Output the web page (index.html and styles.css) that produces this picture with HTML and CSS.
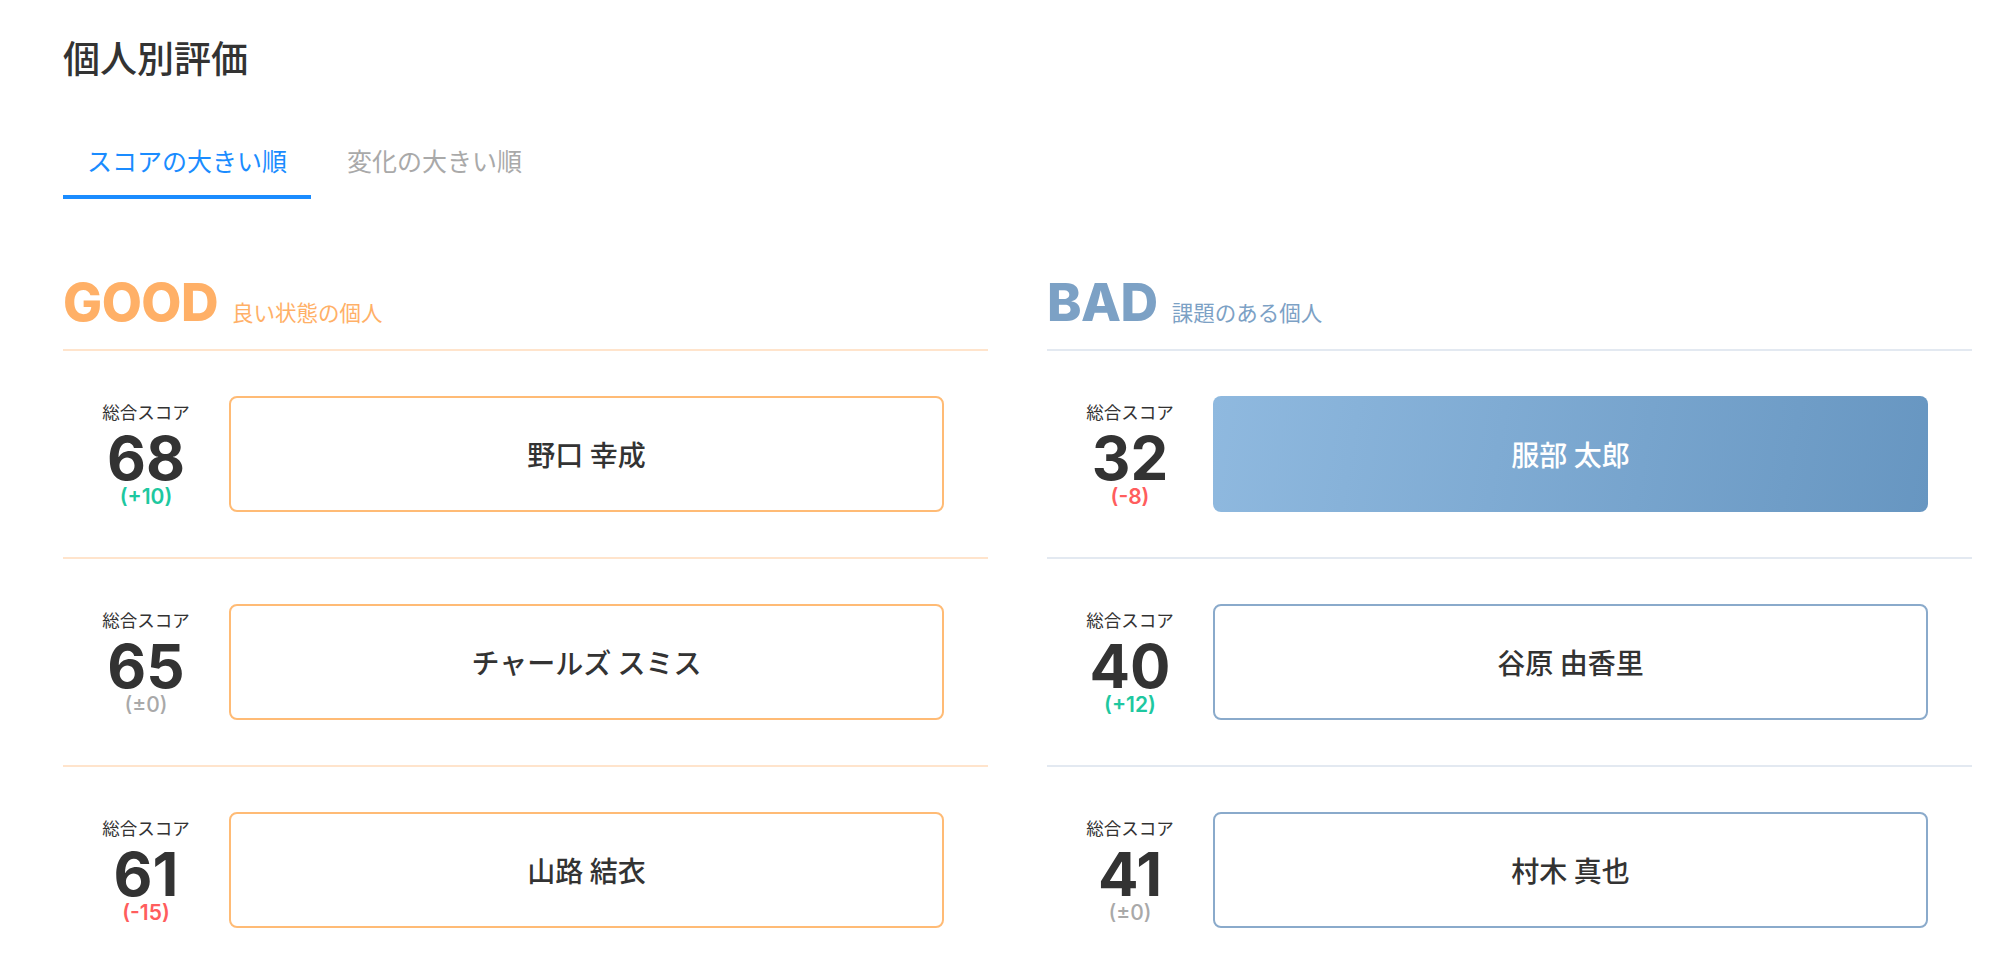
FILE: index.html
```html
<!DOCTYPE html>
<html lang="ja">
<head>
<meta charset="utf-8">
<title>個人別評価</title>
<link rel="stylesheet" href="styles.css">
</head>
<body>
<div class="page">
  <h1 class="title">個人別評価</h1>
  <div class="tabs">
    <div class="tab active">スコアの大きい順</div>
    <div class="tab">変化の大きい順</div>
  </div>
  <div class="columns">
    <section class="col good">
      <div class="col-head"><span class="big">GOOD</span><span class="sub">良い状態の個人</span></div>
      <div class="row">
        <div class="score"><div class="label">総合スコア</div><div class="num">68</div><div class="delta up">(+10)</div></div>
        <div class="card">野口 幸成</div>
      </div>
      <div class="row">
        <div class="score"><div class="label">総合スコア</div><div class="num">65</div><div class="delta zero">(±0)</div></div>
        <div class="card">チャールズ スミス</div>
      </div>
      <div class="row">
        <div class="score"><div class="label">総合スコア</div><div class="num">61</div><div class="delta down">(-15)</div></div>
        <div class="card">山路 結衣</div>
      </div>
    </section>
    <section class="col bad">
      <div class="col-head"><span class="big">BAD</span><span class="sub">課題のある個人</span></div>
      <div class="row">
        <div class="score"><div class="label">総合スコア</div><div class="num">32</div><div class="delta down">(-8)</div></div>
        <div class="card filled">服部 太郎</div>
      </div>
      <div class="row">
        <div class="score"><div class="label">総合スコア</div><div class="num">40</div><div class="delta up">(+12)</div></div>
        <div class="card">谷原 由香里</div>
      </div>
      <div class="row">
        <div class="score"><div class="label">総合スコア</div><div class="num">41</div><div class="delta zero">(±0)</div></div>
        <div class="card">村木 真也</div>
      </div>
    </section>
  </div>
</div>
</body>
</html>
```

FILE: styles.css
```css
* { box-sizing: border-box; }
html, body { margin: 0; padding: 0; background: #fff; }
body {
  font-family: "Inter", "Noto Sans CJK JP", sans-serif;
  color: #333;
}
.page {
  padding: 39px 28px 0 63px;
}
.title {
  margin: 0;
  font-family: "Noto Sans CJK JP", sans-serif;
  font-size: 37px;
  line-height: 37px;
  font-weight: 500;
  color: #333;
}
.tabs {
  display: flex;
  gap: 12px;
  margin-top: 72px;
}
.tab {
  font-family: "Noto Sans CJK JP", sans-serif;
  font-size: 25px;
  line-height: 25px;
  padding: 0 24px 22px;
  border-bottom: 4px solid transparent;
  color: #a9a9a9;
}
.tab.active {
  color: #1a8cff;
  border-bottom-color: #1a8cff;
}
.columns {
  display: flex;
  gap: 59px;
  margin-top: 78px;
}
.col { flex: 1; }
.col-head {
  display: flex;
  align-items: baseline;
  padding-bottom: 20px;
  border-bottom: 2px solid #ffe4cc;
}
.big {
  font-size: 52px;
  line-height: 52px;
  font-weight: 800;
  letter-spacing: -0.5px;
}
.sub {
  font-family: "Noto Sans CJK JP", sans-serif;
  font-size: 21.5px;
  margin-left: 14px;
}
.good .big, .good .sub { color: #ffb067; }
.bad .big, .bad .sub { color: #7ca1c5; }
.bad .col-head { border-bottom-color: #e3e9f1; }
.row {
  display: flex;
  align-items: center;
  padding: 45px 44px 45px 0;
  border-bottom: 2px solid #ffe4cc;
}
.bad .row { border-bottom-color: #e3e9f1; }
.score {
  width: 166px;
  flex: none;
  display: flex;
  flex-direction: column;
  align-items: center;
}
.label {
  font-family: "Noto Sans CJK JP", sans-serif;
  font-size: 17.5px;
  line-height: 22px;
  color: #333;
  margin-bottom: 6px;
}
.num {
  font-size: 60px;
  line-height: 58px;
  font-weight: 700;
  color: #333;
}
.delta {
  font-size: 21px;
  line-height: 20px;
  font-weight: 600;
}
.delta.up { color: #1ec8a0; }
.delta.down { color: #ff5d5d; }
.delta.zero { color: #a9a9a9; font-weight: 500; }
.card {
  flex: 1;
  height: 116px;
  display: flex;
  align-items: center;
  justify-content: center;
  border-radius: 8px;
  font-family: "Noto Sans CJK JP", sans-serif;
  font-size: 28px;
  font-weight: 500;
  color: #333;
}
.good .card { border: 2px solid #ffbb75; }
.bad .card { border: 2px solid #8aaacb; }
.bad .card.filled {
  border: none;
  background: linear-gradient(100deg, #8fb9df 0%, #6796c1 100%);
  color: #fff;
}
```
